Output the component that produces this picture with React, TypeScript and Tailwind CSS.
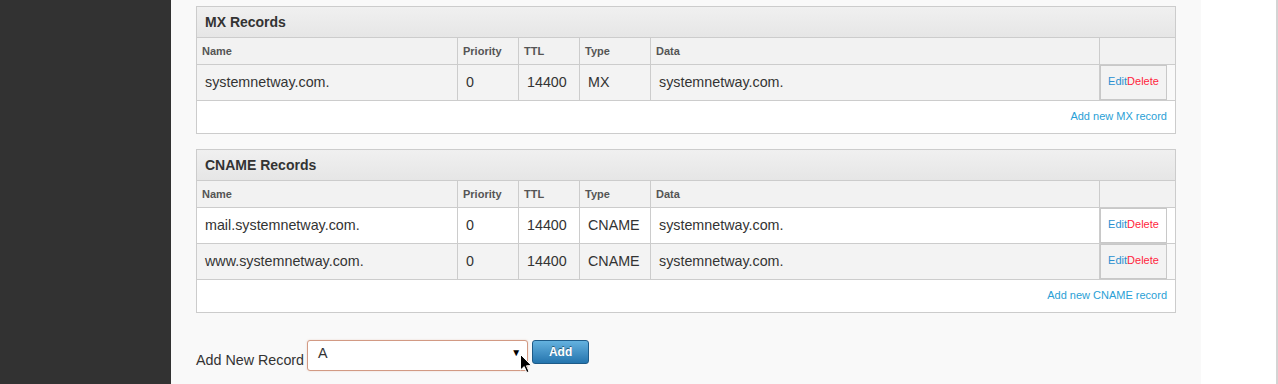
import React from 'react';

type DnsRecord = {
  name: string;
  priority: string;
  ttl: string;
  type: string;
  data: string;
};

const mxRecords: DnsRecord[] = [
  { name: 'systemnetway.com.', priority: '0', ttl: '14400', type: 'MX', data: 'systemnetway.com.' },
];

const cnameRecords: DnsRecord[] = [
  { name: 'mail.systemnetway.com.', priority: '0', ttl: '14400', type: 'CNAME', data: 'systemnetway.com.' },
  { name: 'www.systemnetway.com.', priority: '0', ttl: '14400', type: 'CNAME', data: 'systemnetway.com.' },
];

const cols = 'grid grid-cols-[260px_61px_61px_71px_449px_76px]';

function RecordPanel({
  title,
  records,
  addLabel,
  stripeFirst,
}: {
  title: string;
  records: DnsRecord[];
  addLabel: string;
  stripeFirst: boolean;
}) {
  return (
    <div className="w-[980px] border border-[#cccccc] bg-white">
      <div className="h-[31px] border-b border-[#cccccc] bg-gradient-to-b from-[#f0f0f0] to-[#e6e6e6] pl-2 flex items-center">
        <h3 className="text-[14px] font-bold text-[#333333]">{title}</h3>
      </div>

      {/* column headings */}
      <div className={`${cols} h-[27px] border-b border-[#cccccc] bg-[#f2f2f2] text-[11px] font-bold text-[#555555]`}>
        <div className="pl-[5px] flex items-center">Name</div>
        <div className="pl-[5px] flex items-center border-l border-[#cccccc]">Priority</div>
        <div className="pl-[5px] flex items-center border-l border-[#cccccc]">TTL</div>
        <div className="pl-[5px] flex items-center border-l border-[#cccccc]">Type</div>
        <div className="pl-[5px] flex items-center border-l border-[#cccccc]">Data</div>
        <div className="border-l border-[#cccccc]" />
      </div>

      {records.map((r, i) => {
        const gray = stripeFirst ? i % 2 === 0 : i % 2 === 1;
        return (
          <div
            key={i}
            className={`${cols} h-[36px] border-b border-[#cccccc] text-[14.3px] text-[#333333] ${gray ? 'bg-[#f3f3f3]' : 'bg-white'}`}
          >
            <div className="pl-2 flex items-center">{r.name}</div>
            <div className="pl-2 flex items-center border-l border-[#cccccc]">{r.priority}</div>
            <div className="pl-2 flex items-center border-l border-[#cccccc]">{r.ttl}</div>
            <div className="pl-2 flex items-center border-l border-[#cccccc]">{r.type}</div>
            <div className="pl-2 flex items-center border-l border-[#cccccc]">{r.data}</div>
            <div className={`flex border-l border-[#cccccc] ${gray ? 'bg-[#f9f9f9]' : 'bg-white'}`}>
              <div className={`w-[67px] border border-[#c8c8c8] flex items-center justify-center pb-[2px] text-[11px] ${gray ? 'bg-[#f3f3f3]' : 'bg-white'}`}>
                <span className="text-[#2a8fd0]">Edit</span>
                <span className="text-[#ff1f3d]">Delete</span>
              </div>
            </div>
          </div>
        );
      })}

      <div className="h-[32px] flex items-center justify-end pr-2 pb-[1px]">
        <a className="text-[11px] text-[#2a9fd6]">{addLabel}</a>
      </div>
    </div>
  );
}

export default function App() {
  return (
    <div className="flex h-[384px] w-[1278px] overflow-hidden font-['Liberation_Sans',Arial,sans-serif]">
      <div className="w-[171px] shrink-0 bg-[#323232]" />

      <div className="w-[1030px] shrink-0 bg-[#f9f9f9] pl-[25px] pt-[6px] relative">
        <RecordPanel title="MX Records" records={mxRecords} addLabel="Add new MX record" stripeFirst />
        <div className="h-[15px]" />
        <RecordPanel title="CNAME Records" records={cnameRecords} addLabel="Add new CNAME record" stripeFirst={false} />

        <div className="mt-[27px] flex items-start">
          <span className="mt-[10px] text-[14.3px] text-[#333333]">Add New Record</span>
          <div className="ml-[3px] w-[221px] h-[31px] rounded-[3px] border border-[#d29a84] bg-white flex items-center justify-between pl-[10px] pr-[6px] shadow-[0_0_2px_rgba(210,140,110,0.35)]">
            <span className="text-[14.3px] text-[#333333] -mt-[3px]">A</span>
            <span className="text-[10px] text-black -mt-[6px]">▼</span>
          </div>
          <button className="ml-[4px] w-[57px] h-[24px] rounded-[3px] border border-[#1e5b88] bg-gradient-to-b from-[#64b2df] to-[#2475ae] text-[12px] font-bold text-white [text-shadow:0_-1px_0_rgba(0,0,0,0.45)]">
            Add
          </button>
        </div>

        {/* mouse pointer */}
        <svg className="absolute left-[349px] top-[354px]" width="13" height="20" viewBox="0 0 13 20">
          <path d="M0.5 0.5 L0.5 16 L4.2 12.6 L6.8 18.6 L9 17.6 L6.5 11.8 L11.5 11.6 Z" fill="#000" stroke="#fff" strokeWidth="1" />
        </svg>
      </div>

      <div className="w-[75px] shrink-0 bg-white shadow-[-2px_0_4px_rgba(0,0,0,0.07)]" />
      <div className="w-[2px] shrink-0 bg-[#d4d4d4]" />
    </div>
  );
}
